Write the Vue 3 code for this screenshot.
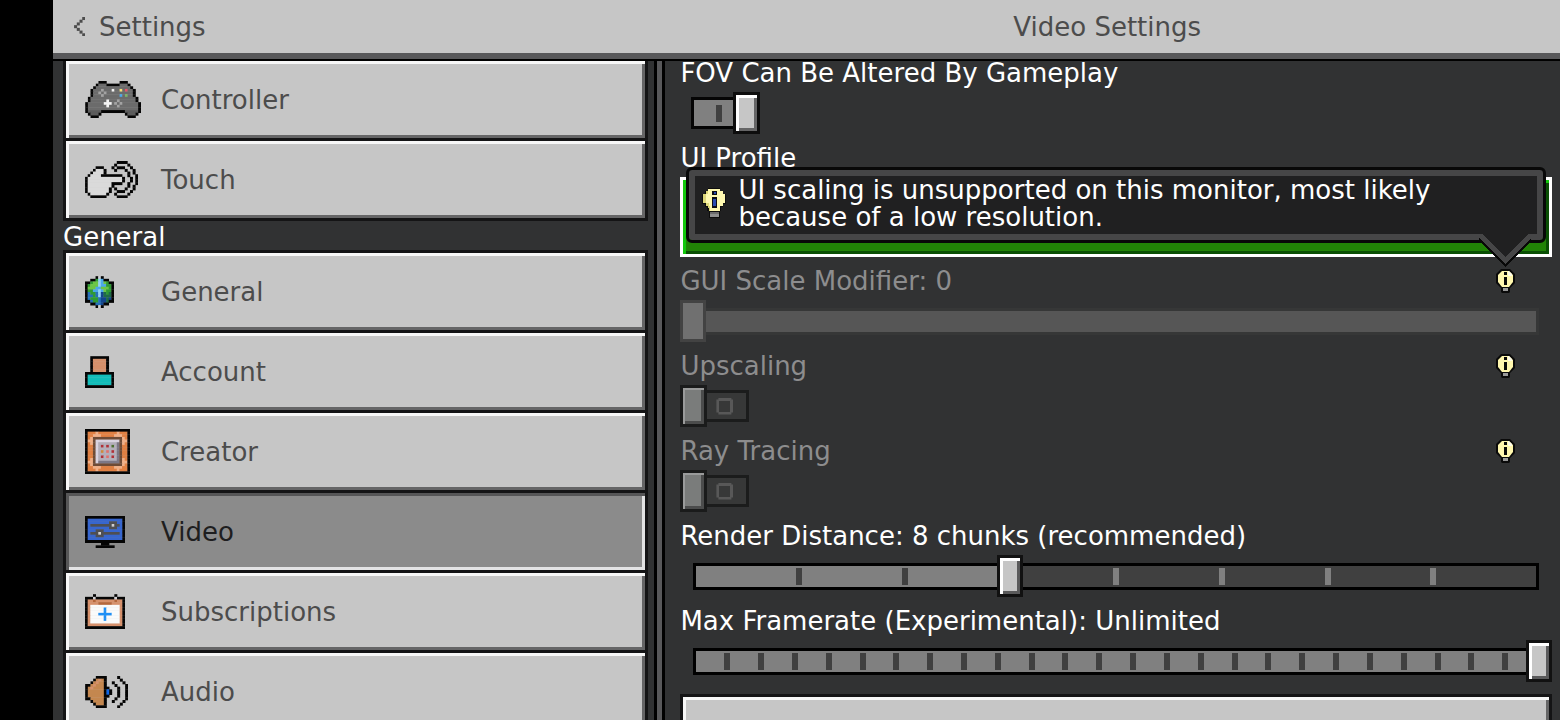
<script setup>
import { ref } from 'vue'

const palette = {
  k: '#050505', g: '#6b6b6b', d: '#5c5c5c', l: '#a3a3a3', w: '#f4f4f4', h: '#dadada',
  y: '#f5e27a', r: '#e8566a', b: '#4aa8ea', e: '#7db567',
  G: '#2f9a34', L: '#6cc644', D: '#1f6b47', c: '#8fd3f2', B: '#12458c', n: '#2470b8',
  s: '#d6906b', t: '#12bdb9',
  o: '#e08043', p: '#f0b088', q: '#6e4b36', v: '#d9d3e0', u: '#b3aeba', x: '#7c7785',
  R: '#b03038', F: '#e0706c', E: '#4d7030', O: '#d08a3a',
  m: '#3766cf', z: '#4f4f52', i: '#cfcfd2',
  a: '#1f8ff5', f: '#fafafa', j: '#b5673c', K: '#4c4c4c',
  C: '#c4874f', U: '#0f66e8'
}

const art = {
  back: ['...K', '..K.', '.K..', 'K...', '.K..', '..K.', '...K'],
  controller: [
    '.....kkk.....kkk.....',
    '....kgggkkkkkgggk....',
    '...kgggggggggggggk...',
    '..kggglgggwggygrggk..',
    '..kgglglggggggggggk..',
    '..kggglggggggbgeggk..',
    '.kgggggggggggggggggk.',
    '.kggggggwggglggggggk.',
    'kggggggwwwglglggggggk',
    'kgggggggwggglgggggggk',
    'kgggggggggggggggggggk',
    'kdddddkkkkkkkkkdddddk',
    '.kdddk.........kdddk.',
    '..kkk...........kkk..'
  ],
  touch: [
    '............kkkk....',
    '...........k....k...',
    '....kkk...k.kkk..k..',
    '...khhhk...k...k..k.',
    '..khhhhk........k.k.',
    '.khhhhkkkkkkkk..k..k',
    'khhhhhhhhhhhhhk..k.k',
    'khhhhhhhhhhhhhk..k.k',
    'khhhhhhhhhkkkk..k..k',
    'khhhhhhhhhk.....k.k.',
    'khhhhhhhhk.k...k..k.',
    'khhhhhhhhk..kkk..k..',
    '.khhhhhhk..k....k...',
    '..kkkkkk....kkkk....'
  ],
  globe: [
    '....kik....',
    '..kkGcbkk..',
    'kkGLLcbLGkk',
    'kGLLLcbbGGk',
    'kLLLbbLLLGk',
    'kGGbbcbLGGk',
    'knGGncBDGDk',
    'knnGncBDDDk',
    'knGGGnBBDBk',
    'kknGGnBBDkk',
    '..kknnBkk..',
    '....kik....'
  ],
  account: [
    '..kkkkkkk..',
    '..ksssssk..',
    '..ksssssk..',
    '..ksssssk..',
    '..ksssssk..',
    '..ksssssk..',
    'kkkkkkkkkkk',
    'ktttttttttk',
    'ktttttttttk',
    'ktttttttttk',
    'ktttttttttk',
    'kkkkkkkkkkk'
  ],
  creator: [
    'kkkkkkkkkkkkkkkkk',
    'kooopooooooopoook',
    'koopppooooopppook',
    'kopqqqqqqqqqqqpok',
    'kppqvvvvvvvvvqppk',
    'kopqvuuuuuuuxqpok',
    'kooqvuRuRuEuxqook',
    'kooqvuuuuuuuxqook',
    'kooqvuOuFuRuxqook',
    'kooqvuuuuuuuxqook',
    'kooqvuRuFuRuxqook',
    'kopqvuuuuuuuxqpok',
    'kppqvxxxxxxxxqppk',
    'kopqqqqqqqqqqqpok',
    'koopppooooopppook',
    'kooopooooooopoook',
    'kkkkkkkkkkkkkkkkk'
  ],
  video: [
    'kkkkkkkkkkkkkkk',
    'kmmmmmmmmmmmmmk',
    'kmmmmmmmmzzzmmk',
    'kmzzzzzzzzizzmk',
    'kmmmmmmmmzzzmmk',
    'kmmmzzzmmmmmmmk',
    'kmzzzizzzzzzzmk',
    'kmmmzzzmmmmmmmk',
    'kmmmmmmmmmmmmmk',
    'kkkkkkkkkkkkkkk',
    '......kkk......',
    '....kkkkkkk....'
  ],
  subscriptions: [
    '...k.......k...',
    'kkkikkkkkkkikkk',
    'kssjsssssssjssk',
    'kssssjjjjjssssk',
    'ksfffffffffffsk',
    'ksfffffafffffsk',
    'ksfffffafffffsk',
    'ksfffaaaaafffsk',
    'ksfffffafffffsk',
    'ksfffffafffffsk',
    'ksfffffffffffsk',
    'ksssssssssssssk',
    'kkkkkkkkkkkkkkk'
  ],
  audio: [
    '....kkkk....k...',
    '...kCsCk.....k..',
    '..kCsCCk..k...k.',
    'kkCsCCCk...k...k',
    'kCsCCCCkk...k..k',
    'kCCCCCCkUk..k..k',
    'kCCCCCCkUk..k..k',
    'kCCCCCCkk...k..k',
    'kkCCCCCk...k...k',
    '..kCCCCk..k...k.',
    '...kCCCk.....k..',
    '....kkkk....k...'
  ]
}

// Cells reach slightly into their neighbours so that no seam shows between them.
const BLEED = 0.12

function sprite(name) {
  const rows = art[name]
  const cells = []
  rows.forEach((row, y) => {
    let x = 0
    while (x < row.length) {
      let end = x + 1
      while (end < row.length && row[end] === row[x]) end++
      if (row[x] !== '.') cells.push({ x, y, w: end - x + BLEED, h: 1 + BLEED, fill: palette[row[x]] })
      x = end
    }
  })
  const w = rows[0].length
  const h = rows.length
  return { cells, box: `0 0 ${w} ${h}`, width: Math.round((w * 8) / 3), height: Math.round((h * 8) / 3) }
}

const back = sprite('back')
const groups = [
  {
    title: '',
    items: [
      { name: 'Controller', icon: sprite('controller') },
      { name: 'Touch', icon: sprite('touch') }
    ]
  },
  {
    title: 'General',
    items: [
      { name: 'General', icon: sprite('globe') },
      { name: 'Account', icon: sprite('account') },
      { name: 'Creator', icon: sprite('creator') },
      { name: 'Video', icon: sprite('video') },
      { name: 'Subscriptions', icon: sprite('subscriptions') },
      { name: 'Audio', icon: sprite('audio') }
    ]
  }
]
const selected = ref('Video')

const settings = ref([
  { id: 'fov', kind: 'toggle', label: 'FOV Can Be Altered By Gameplay', value: true },
  { id: 'profile', kind: 'choice', label: 'UI Profile' },
  { id: 'scale', kind: 'slider', label: 'GUI Scale Modifier: 0', value: 0, steps: 1, disabled: true },
  { id: 'upscaling', kind: 'toggle', label: 'Upscaling', value: false, disabled: true },
  { id: 'ray', kind: 'toggle', label: 'Ray Tracing', value: false, disabled: true },
  { id: 'distance', kind: 'slider', label: 'Render Distance: 8 chunks (recommended)', value: 3, steps: 8 },
  { id: 'framerate', kind: 'slider', label: 'Max Framerate (Experimental): Unlimited', value: 25, steps: 25 }
])
</script>

<template>
  <div class="screen">
    <header class="topbar">
      <button class="back" type="button">
        <svg :viewBox="back.box" :width="back.width" :height="back.height" aria-hidden="true">
          <rect v-for="(c, i) in back.cells" :key="i" :x="c.x" :y="c.y" :width="c.w" :height="c.h" :fill="c.fill" />
        </svg>
        <span>Settings</span>
      </button>
      <h1 class="title">Video Settings</h1>
    </header>

    <div class="body">
      <nav class="sidebar">
        <section v-for="group in groups" :key="group.title">
          <h2 v-if="group.title" class="group-title">{{ group.title }}</h2>
          <div class="group" :class="{ first: !group.title }">
            <button
              v-for="item in group.items"
              :key="item.name"
              type="button"
              class="nav-item"
              :class="{ active: item.name === selected }"
              @click="selected = item.name"
            >
              <span class="icon">
                <svg :viewBox="item.icon.box" :width="item.icon.width" :height="item.icon.height" aria-hidden="true">
                  <rect v-for="(c, i) in item.icon.cells" :key="i" :x="c.x" :y="c.y" :width="c.w" :height="c.h" :fill="c.fill" />
                </svg>
              </span>
              <span>{{ item.name }}</span>
            </button>
          </div>
        </section>
      </nav>

      <div class="divider"></div>

      <main class="content">
        <div v-for="s in settings" :key="s.id" class="setting" :class="{ disabled: s.disabled }">
          <div class="caption">
            <label :id="s.id + '-label'" :for="s.id">{{ s.label }}</label>
            <svg v-if="s.disabled" class="hint" viewBox="0 0 19 24" width="19" height="24" aria-hidden="true">
              <path d="M5 0H14L19 5V14L14 19V23L13 24H6L5 23V19L0 14V5Z" fill="#0a0a0a" />
              <path d="M6 2H13L17 6V13L13 18H6L2 13V6Z" fill="#fff7ae" />
              <path d="M12 2H13L16 5V7H12Z" fill="#fffde9" />
              <path d="M8 3H11V6H8ZM8 8H11V16H8Z" fill="#0a0a0a" />
              <path d="M7 19H12V22H7Z" fill="#9a9a9a" />
            </svg>
          </div>

          <div v-if="s.kind === 'toggle'" class="toggle">
            <span class="switch"><span :class="s.value ? 'mark-on' : 'mark-off'"></span></span>
            <input :id="s.id" v-model="s.value" type="checkbox" :disabled="s.disabled" />
          </div>

          <div v-else-if="s.kind === 'slider'" class="slider">
            <div class="rail">
              <div class="fill" :style="{ width: (100 * s.value) / s.steps + '%' }"></div>
              <div class="ticks">
                <span
                  v-for="n in s.steps - 1"
                  :key="n"
                  class="tick"
                  :class="{ passed: n < s.value }"
                  :style="{ left: (100 * n) / s.steps + '%' }"
                ></span>
              </div>
            </div>
            <input :id="s.id" v-model.number="s.value" type="range" min="0" :max="s.steps" :disabled="s.disabled" />
          </div>

          <div v-else class="choice">
            <button :id="s.id" type="button" class="profile" :aria-labelledby="s.id + '-label'"></button>
            <div class="tooltip" role="tooltip">
              <div class="bubble">
                <svg viewBox="0 0 24 30" width="24" height="30" shape-rendering="crispEdges" aria-hidden="true">
                  <path d="M6 0H18V3H21V6H24V16H21V19H19V23H18V30H7V23H5V19H3V16H0V6H3V3H6Z" fill="#0d0d0d" />
                  <path d="M6 1H18V3H21V6H23V15H21V18H18V23H7V18H4V15H1V6H4V3H6Z" fill="#fff9b0" />
                  <path d="M1 6H4V15H7V23H8V18H4V15H1ZM4 3H6V6H4ZM4 15H7V20H6V18H4Z" fill="#dcd678" />
                  <path d="M10 3H15V7H10ZM10 9H15V20H10Z" fill="#0d0d14" />
                  <path d="M12 4H14V6H12ZM11 11H14V18H11Z" fill="#2a4bb0" />
                  <path d="M8 24H17V29H8Z" fill="#8f8f8f" />
                  <path d="M8 24H17V26H8Z" fill="#6d6d6d" />
                </svg>
                <p>UI scaling is unsupported on this monitor, most likely<br />because of a low resolution.</p>
              </div>
              <svg class="pointer" viewBox="0 0 52 34" width="52" height="34" shape-rendering="crispEdges" aria-hidden="true">
                <path d="M0 5V8L26 34 52 8V5Z" fill="#080808" />
                <path d="M0 1H52V5L26 31 0 5Z" fill="#464647" />
                <path d="M3 0H49V1L26 24 3 1Z" fill="#202021" />
              </svg>
            </div>
          </div>
        </div>
        <button type="button" class="more" aria-label="More options"></button>
      </main>
    </div>
  </div>
</template>

<style>
html,
body {
  background: #000;
}
</style>

<style scoped>
.screen {
  box-sizing: border-box;
  height: 100vh;
  padding-left: 53px;
  display: flex;
  flex-direction: column;
  overflow: hidden;
  background: #000;
  font-family: "DejaVu Sans", "Noto Sans", sans-serif;
  font-size: 26px;
  color: #fff;
}
button {
  margin: 0;
  padding: 0;
  border: 0;
  background: none;
  font: inherit;
  color: inherit;
  text-align: left;
}
h1,
h2,
p {
  margin: 0;
  font-size: inherit;
  font-weight: normal;
}
svg {
  display: block;
  flex: none;
}
.topbar,
.body {
  display: grid;
  grid-template-columns: minmax(0, 201fr) 11px minmax(0, 299fr);
}
.topbar {
  flex: none;
  height: 53px;
  align-items: center;
  background: #c6c6c6;
  border-bottom: 6px solid #58585a;
  color: #4c4c4c;
}
.back {
  display: flex;
  align-items: center;
  gap: 14px;
  padding-left: 21px;
}
.title {
  grid-column: 2 / 4;
  text-align: center;
}
.body {
  flex: 1;
  min-height: 0;
  border-top: 2px solid #000;
  background: #313233;
}
.sidebar {
  min-height: 0;
  padding: 0 6px 0 10px;
}
.group-title {
  height: 29px;
  line-height: 32px;
}
.group {
  display: flex;
  flex-direction: column;
  gap: 3px;
  padding: 3px;
  background: #141415;
}
.group.first {
  padding-top: 0;
}
.nav-item {
  display: flex;
  align-items: center;
  height: 77px;
  padding-left: 19px;
  background: #c6c6c6;
  color: #4c4c4c;
  box-shadow: inset 3px 3px #f7f7f7, inset -3px -3px #656566;
}
.nav-item.active {
  background: #8b8b8b;
  color: #1e1e1f;
  box-shadow: inset 3px 3px #565657, inset -3px -3px #e3e3e4;
}
.icon {
  width: 76px;
}
.divider {
  box-sizing: border-box;
  border: solid #000;
  border-width: 0 3px;
  background: #58585a;
}
.content {
  min-height: 0;
  padding: 0 8px 0 15px;
}
.setting {
  margin-bottom: 12px;
}
.caption {
  display: flex;
  justify-content: space-between;
  height: 22px;
  line-height: 24px;
  margin-bottom: 9px;
  padding-right: 37px;
  white-space: nowrap;
}
.disabled .caption {
  color: #8d8d8e;
}
.toggle {
  position: relative;
  box-sizing: border-box;
  width: 80px;
  height: 42px;
  padding: 5px 11px;
}
.switch {
  display: flex;
  align-items: center;
  box-sizing: border-box;
  width: 58px;
  height: 32px;
  padding-left: 22px;
  border: 3px solid #050505;
  background: #808080;
}
.mark-on {
  width: 6px;
  height: 17px;
  background: #404040;
}
.mark-off {
  box-sizing: border-box;
  width: 17px;
  height: 17px;
  border: 3px solid #585858;
  clip-path: polygon(2px 0, 15px 0, 15px 2px, 17px 2px, 17px 15px, 15px 15px, 15px 17px, 2px 17px, 2px 15px, 0 15px, 0 2px, 2px 2px);
}
.disabled .switch {
  border-color: #1b1c1c;
  background: #373838;
}
.toggle input {
  appearance: none;
  position: absolute;
  inset: 0;
  margin: 0;
}
.toggle input::before {
  content: "";
  position: absolute;
  left: 0;
  box-sizing: border-box;
  width: 27px;
  height: 42px;
  border: 3px solid #0d0d0d;
  background: #c6c6c6;
  box-shadow: inset 3px 3px #fff, inset -3px -3px #656566;
}
.toggle input:checked::before {
  left: 53px;
}
.toggle input:disabled::before {
  border-color: #1a1b1b;
  background: #7a7c7b;
  box-shadow: inset 2px 2px #9a9b9b, inset -3px -3px #4b4c4c;
}
.slider {
  position: relative;
  box-sizing: border-box;
  height: 42px;
  padding: 8px 13px;
}
.rail {
  position: relative;
  box-sizing: border-box;
  height: 27px;
  border: 3px solid #000;
  background: #404040;
}
.fill {
  height: 100%;
  background: #808080;
}
.ticks {
  position: absolute;
  inset: -3px;
}
.tick {
  position: absolute;
  top: 5px;
  width: 6px;
  height: 17px;
  margin-left: -3px;
  background: #808080;
}
.tick.passed {
  background: #404040;
}
.disabled .rail {
  border-color: #363737;
  background: #565656;
}
.slider input {
  appearance: none;
  position: absolute;
  inset: 0;
  width: 100%;
  height: 42px;
  margin: 0;
  background: none;
}
.slider input::-webkit-slider-thumb {
  appearance: none;
  box-sizing: border-box;
  width: 26px;
  height: 42px;
  border: 3px solid #111;
  border-radius: 0;
  background: #c6c6c6;
  box-shadow: inset 3px 3px #fff, inset -3px -3px #5a5a5b;
}
.slider input:disabled::-webkit-slider-thumb {
  border-color: #434343;
  background: #707070;
  box-shadow: none;
}
.choice {
  position: relative;
}
.profile {
  display: block;
  width: 100%;
  height: 80px;
  border: 3px solid #fff;
  background: #218306;
  box-shadow: inset 3px 3px #12c80c, inset -3px -3px #0a4f04;
}
.tooltip {
  position: absolute;
  top: -10px;
  left: 6px;
  right: 6px;
}
.bubble {
  display: flex;
  align-items: flex-start;
  gap: 12px;
  padding: 0 12px 2px 7px;
  border: 6px solid #464647;
  outline: 3px solid #080808;
  margin: 3px;
  border-radius: 3px;
  background: #202021;
  line-height: 27px;
  white-space: nowrap;
}
.bubble svg {
  margin-top: 12px;
}
.bubble p {
  padding: 1px 0;
}
.pointer {
  position: absolute;
  right: 15px;
  top: 66px;
}
.more {
  display: block;
  width: 100%;
  height: 80px;
  border: 3px solid #141415;
  background: #c6c6c6;
  box-shadow: inset 3px 3px #f7f7f7, inset -3px -3px #656566;
}
</style>
